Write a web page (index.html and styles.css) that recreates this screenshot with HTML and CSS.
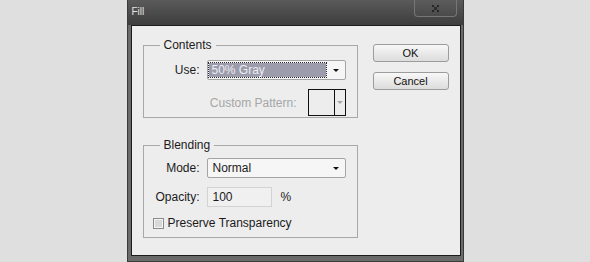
FILE: index.html
```html
<!DOCTYPE html>
<html lang="en">
<head>
    <meta charset="UTF-8">
    <title>Fill</title>
    <link rel="stylesheet" href="styles.css">
</head>
<body>

<!-- Fill dialog -->
<div class="window" role="dialog" aria-label="Fill">
    <div class="titlebar">
        <span class="title">Fill</span>
        <button class="close" aria-label="Close">
            <svg width="7" height="7" viewBox="0 0 7 7">
                <rect x="0" y="0" width="2" height="2" fill="#262626"/>
                <rect x="5" y="0" width="2" height="2" fill="#262626"/>
                <rect x="2" y="2" width="3" height="3" fill="#2e2e2e"/>
                <rect x="0" y="5" width="2" height="2" fill="#262626"/>
                <rect x="5" y="5" width="2" height="2" fill="#262626"/>
            </svg>
        </button>
    </div>

    <div class="frame">
        <div class="panel">
            <div class="groups">
                <fieldset class="group">
                    <legend>Contents</legend>
                    <div class="grid grid-contents">
                        <label>Use:</label>
                        <div class="select focused">
                            <span class="value">50% Gray</span>
                            <span class="caret"></span>
                        </div>
                        <div class="pattern-row">
                            <span class="disabled">Custom Pattern:</span>
                            <div class="pattern">
                                <span class="swatch"></span>
                                <span class="pattern-arrow"><span class="caret caret-off"></span></span>
                            </div>
                        </div>
                    </div>
                </fieldset>

                <fieldset class="group">
                    <legend>Blending</legend>
                    <div class="grid grid-blending">
                        <label>Mode:</label>
                        <div class="select">
                            <span class="value">Normal</span>
                            <span class="caret"></span>
                        </div>
                        <label>Opacity:</label>
                        <div class="opacity">
                            <span class="input">100</span>
                            <span>%</span>
                        </div>
                        <label class="check-row"><span class="checkbox"></span>Preserve Transparency</label>
                    </div>
                </fieldset>
            </div>

            <div class="buttons">
                <button class="btn">OK</button>
                <button class="btn">Cancel</button>
            </div>
        </div>
    </div>
</div>

</body>
</html>
```

FILE: styles.css
```css
        body {
            margin: 0;
            background-color: #dfdfdf;
            font-family: "Liberation Sans", Arial, sans-serif;
            font-size: 12px;
            color: #1b1b1b;
        }

        .window {
            width: 337px;
            height: 262px;
            margin: 0 auto;
            box-sizing: border-box;
            display: flex;
            flex-direction: column;
            background-color: #6a6a6a;
            border: 1px solid #3a3a3a;
            border-top: none;
        }

        .titlebar {
            height: 25px;
            flex: none;
            display: flex;
            justify-content: space-between;
            align-items: flex-start;
            padding-left: 4px;
            background: linear-gradient(#5a5a5a, #3d3d3d);
        }

        .title {
            font-size: 10px;
            line-height: 24px;
            color: #e2e2e2;
        }

        .close {
            width: 43px;
            height: 17px;
            margin-right: 6px;
            padding: 0;
            display: flex;
            align-items: center;
            justify-content: center;
            border: 1px solid #767676;
            border-top: none;
            border-radius: 0 0 4px 4px;
            background: linear-gradient(#5c5c5c, #4a4a4a);
        }

        .frame {
            flex: 1;
            display: flex;
            padding: 0 2px 5px 3px;
        }

        .panel {
            flex: 1;
            display: flex;
            gap: 15px;
            padding: 12px 11px 0 11px;
            border: 1px solid #1c1c1c;
            background-color: #ededed;
        }

        /* Group boxes */
        .groups {
            display: flex;
            flex-direction: column;
            gap: 20px;
        }

        .group {
            width: 215px;
            box-sizing: border-box;
            margin: 0;
            padding: 0 11px 0 0;
            border: 1px solid #a8a8a8;
        }

        .group legend {
            margin-left: 16px;
            padding: 0 4px;
            line-height: 14px;
        }

        .grid {
            display: grid;
            grid-template-columns: 56px 139px;
            column-gap: 7px;
            align-items: center;
        }

        .grid-contents {
            row-gap: 9px;
            padding: 8px 0 1px;
        }

        .grid-blending {
            row-gap: 9px;
            padding: 6px 0 7px;
        }

        .grid label {
            text-align: right;
        }

        .select {
            height: 20px;
            box-sizing: border-box;
            display: flex;
            align-items: center;
            justify-content: space-between;
            padding: 0 6px 0 5px;
            border: 1px solid #a4a4a4;
            border-radius: 2px;
            background-color: #f6f6f6;
        }

        .select.focused {
            padding-left: 1px;
        }

        .select.focused .value {
            width: 117px;
            height: 14px;
            box-sizing: border-box;
            padding-left: 3px;
            line-height: 14px;
            color: #ececf2;
            background-color: #9c9cad;
            outline: 1px dotted #2a2a2a;
        }

        .caret {
            width: 0;
            height: 0;
            border-left: 3px solid transparent;
            border-right: 3px solid transparent;
            border-top: 3px solid #111;
        }

        .caret-off {
            border-top-color: #a8a8a8;
        }

        .pattern-row {
            grid-column: 1 / -1;
            display: flex;
            justify-content: flex-end;
            align-items: center;
            gap: 11px;
        }

        .disabled {
            color: #a6a6a6;
        }

        .pattern {
            width: 38px;
            height: 27px;
            box-sizing: border-box;
            display: flex;
            border: 1px solid #111;
        }

        .swatch {
            width: 25px;
            border-right: 1px solid #111;
        }

        .pattern-arrow {
            flex: 1;
            display: flex;
            align-items: center;
            justify-content: center;
        }

        .opacity {
            display: flex;
            align-items: center;
            gap: 9px;
        }

        .input {
            width: 65px;
            height: 20px;
            box-sizing: border-box;
            padding-left: 5px;
            line-height: 18px;
            border: 1px solid #d3d3d3;
            background-color: #f0f0f0;
        }

        .grid .check-row {
            grid-column: 1 / -1;
            display: flex;
            align-items: center;
            gap: 4px;
            padding-left: 9px;
            text-align: left;
        }

        .checkbox {
            width: 11px;
            height: 11px;
            box-sizing: border-box;
            border: 1px solid #8a8a8a;
            background-color: #d8d8d8;
            box-shadow: inset 0 0 0 1px #f3f3f3;
        }

        /* Buttons */
        .buttons {
            display: flex;
            flex-direction: column;
            gap: 10px;
            padding-top: 6px;
        }

        .btn {
            width: 76px;
            height: 18px;
            padding: 0;
            font-family: inherit;
            font-size: 11px;
            color: #111;
            border: 1px solid #9c9c9c;
            border-radius: 3px;
            background: linear-gradient(#f8f8f8, #dcdcdc);
        }
```
